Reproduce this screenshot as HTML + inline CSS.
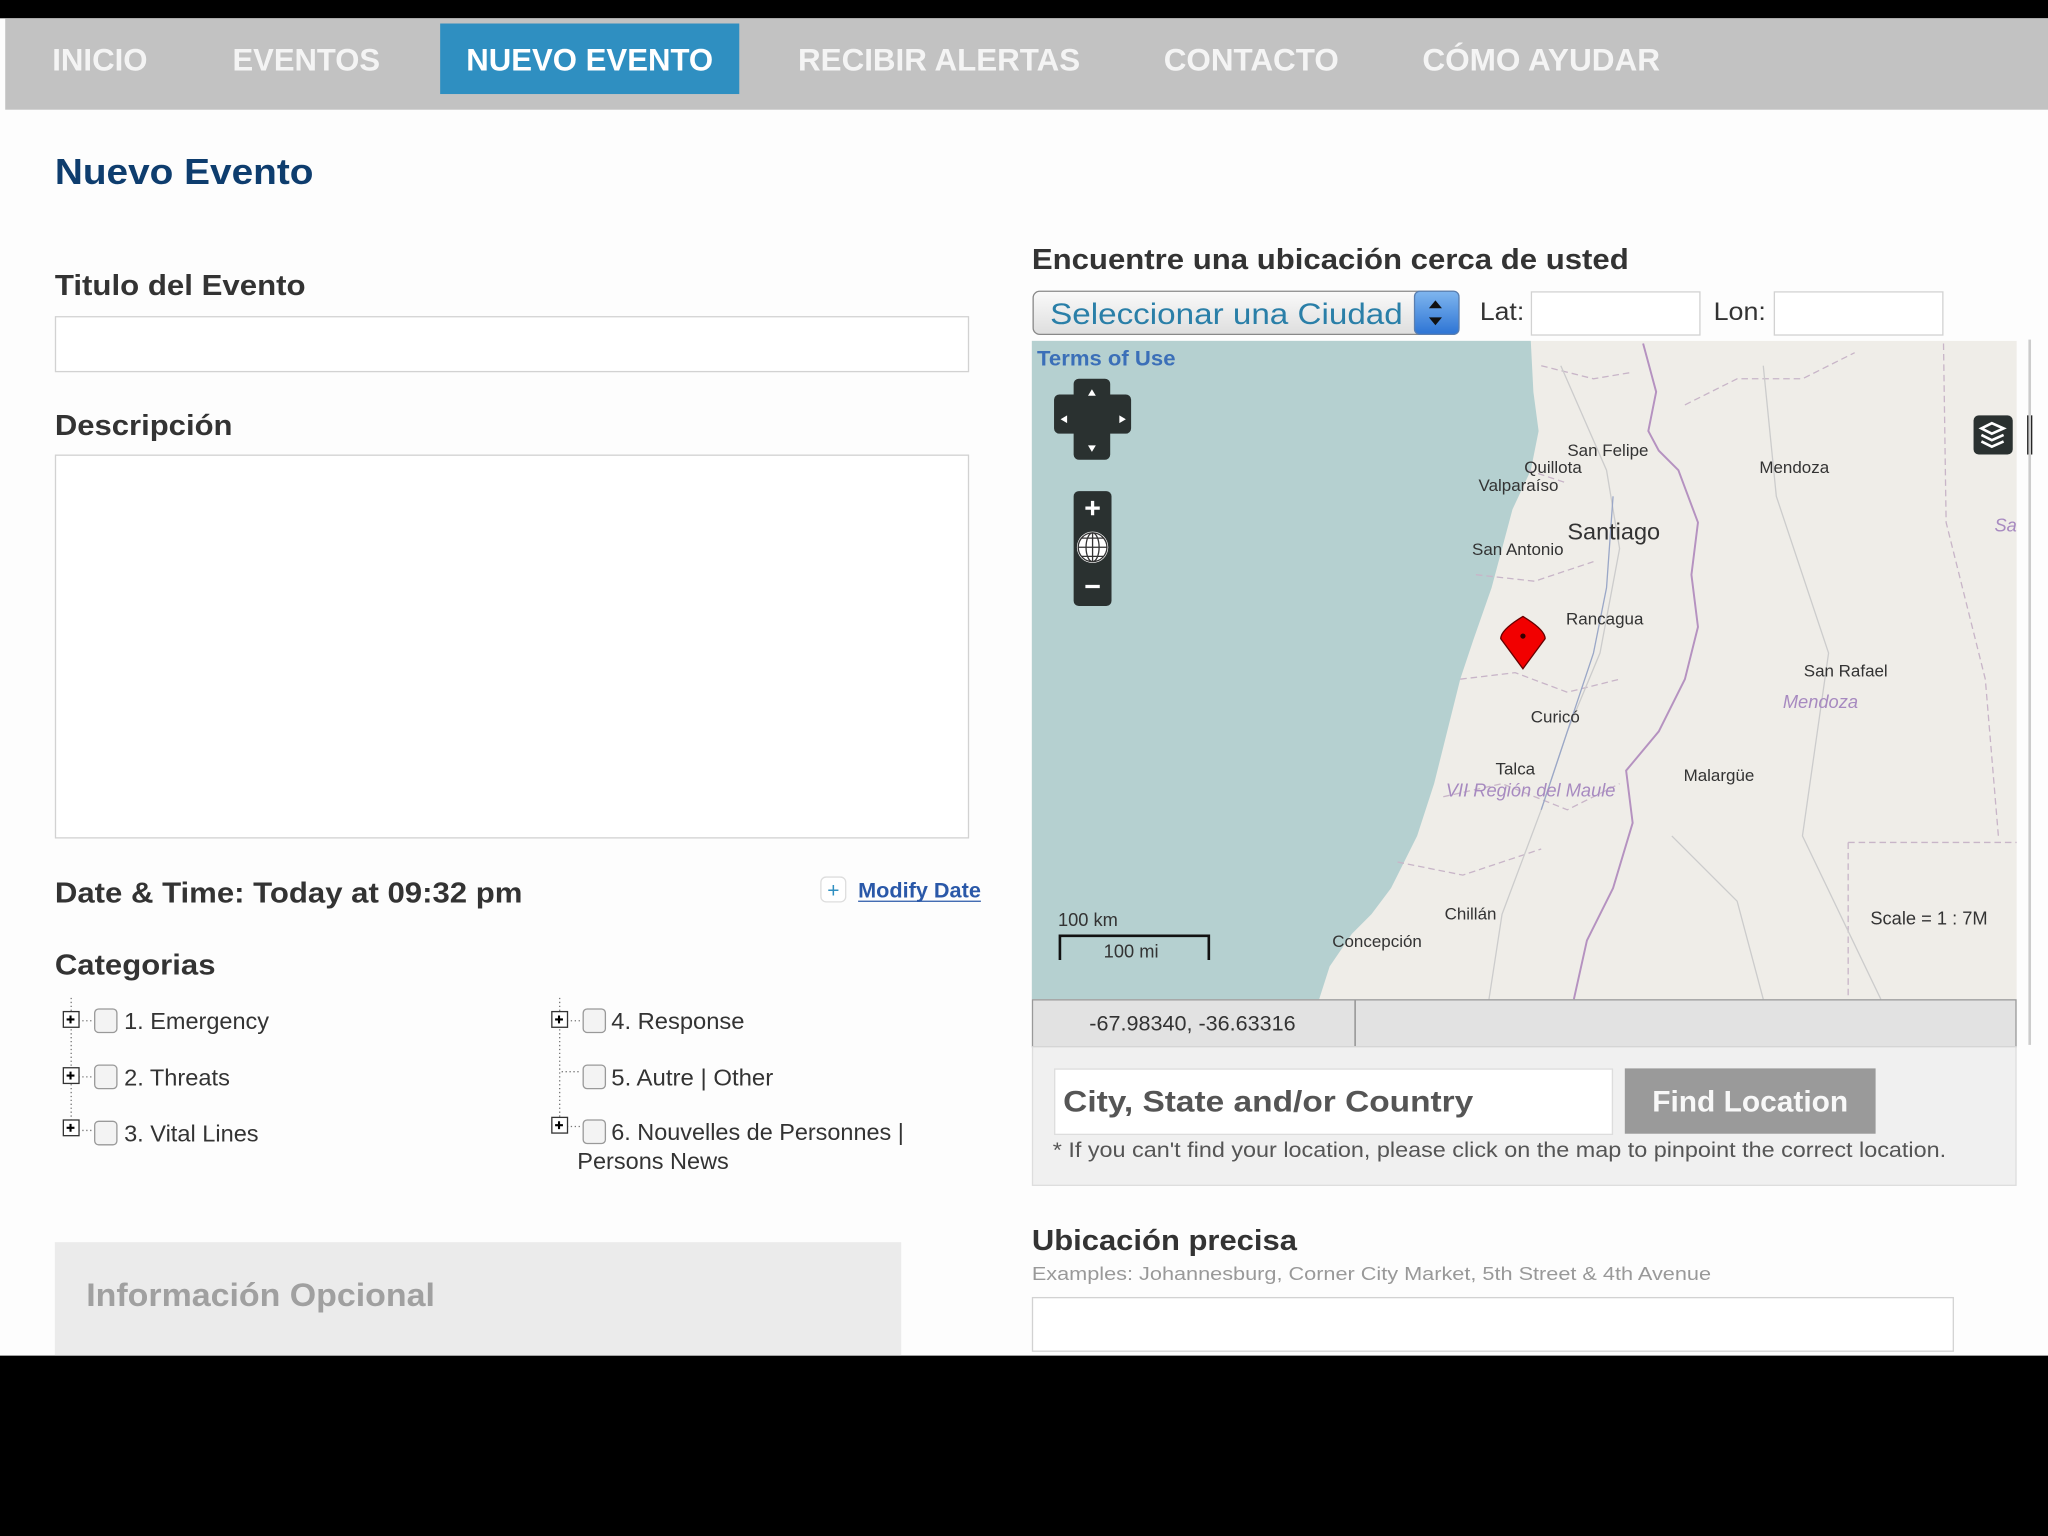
<!DOCTYPE html>
<html><head><meta charset="utf-8"><style>
html,body{margin:0;padding:0;background:#000;}
svg{display:block}
text{font-family:"Liberation Sans",Arial,sans-serif}
</style></head><body>
<svg width="2048" height="1536" viewBox="0 0 1568 1176" xmlns="http://www.w3.org/2000/svg">
<rect x="0" y="0" width="1568" height="1176" fill="#000"/>
<rect x="0" y="14" width="1568" height="1024" fill="#fdfdfd"/>
<rect x="4" y="14" width="1564" height="70" fill="#c2c2c2"/>
<rect x="337" y="18" width="229" height="54" fill="#2f8fc1"/>
<g font-weight="bold" font-size="24" fill="#f4f4f4">
<text x="40" y="54" textLength="73" lengthAdjust="spacingAndGlyphs">INICIO</text>
<text x="178" y="54" textLength="113" lengthAdjust="spacingAndGlyphs">EVENTOS</text>
<text x="357" y="54" textLength="189" lengthAdjust="spacingAndGlyphs" fill="#fff">NUEVO EVENTO</text>
<text x="611" y="54" textLength="216" lengthAdjust="spacingAndGlyphs">RECIBIR ALERTAS</text>
<text x="891" y="54" textLength="134" lengthAdjust="spacingAndGlyphs">CONTACTO</text>
<text x="1089" y="54" textLength="182" lengthAdjust="spacingAndGlyphs">CÓMO AYUDAR</text>
</g>
<text x="42" y="141" font-size="28" font-weight="bold" fill="#0e3d6e" textLength="198" lengthAdjust="spacingAndGlyphs">Nuevo Evento</text>
<g font-weight="bold" font-size="22" fill="#333">
<text x="42" y="226" textLength="192" lengthAdjust="spacingAndGlyphs">Titulo del Evento</text>
<text x="42" y="333" textLength="136" lengthAdjust="spacingAndGlyphs">Descripción</text>
<text x="42" y="691" textLength="358" lengthAdjust="spacingAndGlyphs">Date &amp; Time: Today at 09:32 pm</text>
<text x="42" y="746" textLength="123" lengthAdjust="spacingAndGlyphs">Categorias</text>
</g>
<rect x="42.5" y="242.5" width="699" height="42" fill="#fff" stroke="#d2d2d2"/>
<rect x="42.5" y="348.5" width="699" height="293" fill="#fff" stroke="#d2d2d2"/>
<rect x="628.5" y="671.5" width="19" height="19" rx="4" fill="#fff" stroke="#ddd"/>
<text x="638" y="687" font-size="16" fill="#2f8fc1" text-anchor="middle">+</text>
<text x="657" y="687" font-size="16" font-weight="bold" fill="#2a58a8" textLength="94" lengthAdjust="spacingAndGlyphs">Modify Date</text>
<line x1="657" y1="690" x2="751" y2="690" stroke="#2a58a8"/>
<g stroke="#777" stroke-dasharray="1,2" fill="none">
<line x1="54.5" y1="764" x2="54.5" y2="862"/>
<line x1="428.5" y1="764" x2="428.5" y2="858"/>
<line x1="60" y1="781.5" x2="70" y2="781.5"/><line x1="60" y1="824.5" x2="70" y2="824.5"/><line x1="60" y1="865.5" x2="70" y2="865.5"/>
<line x1="434" y1="781.5" x2="444" y2="781.5"/><line x1="430" y1="820.5" x2="444" y2="820.5"/><line x1="434" y1="862.5" x2="444" y2="862.5"/>
</g>
<g fill="#fff" stroke="#333" stroke-width="1">
<rect x="48.5" y="774.5" width="12" height="12"/><rect x="48.5" y="817.5" width="12" height="12"/><rect x="48.5" y="857.5" width="12" height="12"/>
<rect x="422.5" y="774.5" width="12" height="12"/><rect x="422.5" y="855.5" width="12" height="12"/>
</g>
<g stroke="#000" stroke-width="1.6">
<path d="M51 780.5h6M54 777.5v6M51 823.5h6M54 820.5v6M51 863.5h6M54 860.5v6M425 780.5h6M428 777.5v6M425 861.5h6M428 858.5v6"/>
</g>
<g fill="#f3f3f3" stroke="#999">
<rect x="72.5" y="772.5" width="17" height="18" rx="3"/><rect x="72.5" y="815.5" width="17" height="18" rx="3"/><rect x="72.5" y="858.5" width="17" height="18" rx="3"/>
<rect x="446.5" y="772.5" width="17" height="18" rx="3"/><rect x="446.5" y="815.5" width="17" height="18" rx="3"/><rect x="446.5" y="857.5" width="17" height="18" rx="3"/>
</g>
<g font-size="18" fill="#333">
<text x="95" y="788" textLength="111" lengthAdjust="spacingAndGlyphs">1. Emergency</text>
<text x="95" y="831" textLength="81" lengthAdjust="spacingAndGlyphs">2. Threats</text>
<text x="95" y="874" textLength="103" lengthAdjust="spacingAndGlyphs">3. Vital Lines</text>
<text x="468" y="788" textLength="102" lengthAdjust="spacingAndGlyphs">4. Response</text>
<text x="468" y="831" textLength="124" lengthAdjust="spacingAndGlyphs">5. Autre | Other</text>
<text x="468" y="873" textLength="224" lengthAdjust="spacingAndGlyphs">6. Nouvelles de Personnes |</text>
<text x="442" y="895" textLength="116" lengthAdjust="spacingAndGlyphs">Persons News</text>
</g>
<rect x="42" y="951" width="648" height="87" fill="#ebebeb"/>
<text x="66" y="1000" font-size="25" font-weight="bold" fill="#a0a0a0" textLength="267" lengthAdjust="spacingAndGlyphs">Información Opcional</text>
<text x="790" y="206" font-size="22" font-weight="bold" fill="#333" textLength="457" lengthAdjust="spacingAndGlyphs">Encuentre una ubicación cerca de usted</text>
<defs><linearGradient id="sg" x1="0" y1="0" x2="0" y2="1"><stop offset="0" stop-color="#fafafa"/><stop offset="1" stop-color="#dedede"/></linearGradient>
<linearGradient id="bg" x1="0" y1="0" x2="0" y2="1"><stop offset="0" stop-color="#7fb6ef"/><stop offset="1" stop-color="#2d74d4"/></linearGradient></defs>
<rect x="791" y="223" width="326" height="33" rx="5" fill="url(#sg)" stroke="#888"/>
<rect x="1083" y="223" width="34" height="33" rx="4" fill="url(#bg)" stroke="#5a7fb0"/>
<path d="M1094 236l5-6 5 6zM1094 243l5 6 5-6z" fill="#111"/>
<text x="804" y="248" font-size="23" fill="#2a7fa8" textLength="270" lengthAdjust="spacingAndGlyphs">Seleccionar una Ciudad</text>
<text x="1133" y="245" font-size="19" fill="#333" textLength="34" lengthAdjust="spacingAndGlyphs">Lat:</text>
<rect x="1172.5" y="223.5" width="129" height="33" fill="#fff" stroke="#d2d2d2"/>
<text x="1312" y="245" font-size="19" fill="#333" textLength="40" lengthAdjust="spacingAndGlyphs">Lon:</text>
<rect x="1358.5" y="223.5" width="129" height="33" fill="#fff" stroke="#d2d2d2"/>
<rect x="790" y="261" width="754" height="504" fill="#efede8"/>
<path d="M790 261 H1172 L1174 300 L1178 330 L1172 360 L1158 390 L1150 420 L1142 450 L1128 490 L1118 520 L1108 560 L1098 600 L1085 640 L1065 680 L1050 700 L1035 715 L1018 740 L1010 765 H790 Z" fill="#b5d0d0"/>
<g fill="none" stroke="#b592c0" stroke-width="1.5">
<path d="M1258 263 L1268 300 L1262 330 L1270 345 L1285 360 L1300 400 L1295 440 L1300 480 L1290 520 L1270 560 L1245 590 L1250 630 L1235 680 L1215 720 L1205 765"/>
</g>
<g fill="none" stroke="#c8b5c8" stroke-width="1" stroke-dasharray="5,3">
<path d="M1180 280 L1220 290 L1250 285 M1170 360 L1200 370 M1130 440 L1175 445 L1220 430 M1118 520 L1160 515 L1200 530 L1240 520 M1105 610 L1150 600 L1200 620 L1240 600 M1070 660 L1120 670 L1180 650 M1290 310 L1330 290 L1380 290 L1420 270 M1488 263 L1490 400 L1520 520 L1530 640 M1415 645 H1544 M1415 645 V765"/>
</g>
<g fill="none" stroke="#ccc" stroke-width="1">
<path d="M1195 280 L1230 360 L1240 420 L1225 500 L1200 560 L1180 620 L1150 700 L1140 765 M1350 280 L1360 380 L1400 500 L1380 640 L1440 765 M1280 640 L1330 690 L1350 765"/>
</g>
<g fill="none" stroke="#9aa7c7" stroke-width="1"><path d="M1235 380 L1230 450 L1220 500 L1200 560 L1180 620"/></g>
<text x="794" y="280" font-size="16" font-weight="bold" fill="#3b6fb8" textLength="106" lengthAdjust="spacingAndGlyphs">Terms of Use</text>
<path d="M826 290 h20 a4 4 0 0 1 4 4 v8 h12 a4 4 0 0 1 4 4 v22 a4 4 0 0 1-4 4 h-12 v16 a4 4 0 0 1-4 4 h-20 a4 4 0 0 1-4-4 v-16 h-11 a4 4 0 0 1-4-4 v-22 a4 4 0 0 1 4-4 h11 v-8 a4 4 0 0 1 4-4z" fill="#2a3130"/>
<path d="M836 298l-3 5h6z M836 346l-3-5h6z M812 321l5-3v6z M862 321l-5-3v6z" fill="#fff"/>
<rect x="822" y="376" width="29" height="88" rx="4" fill="#2a3130"/>
<path d="M831 389h11M836.5 383.5v11M831 449h11" stroke="#fff" stroke-width="2.5"/>
<circle cx="836.5" cy="419" r="12" fill="#fff"/>
<circle cx="836.5" cy="419" r="11" fill="none" stroke="#333"/>
<path d="M825.5 419h22M836.5 408v22M828 412h17M828 426h17" stroke="#333" stroke-width="1" fill="none"/>
<ellipse cx="836.5" cy="419" rx="5" ry="11" fill="none" stroke="#333"/>
<rect x="1511" y="318" width="30" height="30" rx="4" fill="#2a3130"/>
<path d="M1517 328l8-4 9 4-9 4zM1517 333l8 4 9-4M1517 338l8 4 9-4" fill="none" stroke="#fff" stroke-width="2"/>
<rect x="1552" y="318" width="4" height="30" fill="#222"/>
<path d="M1166 472 C1176 478 1183 484 1183 489 L1166 512 L1149 489 C1149 484 1156 478 1166 472 Z" fill="#f20000" stroke="#600" stroke-width="1"/>
<circle cx="1166" cy="487" r="2" fill="#300"/>
<g font-size="13" fill="#333">
<text x="1200" y="349">San Felipe</text>
<text x="1167" y="362">Quillota</text>
<text x="1132" y="376">Valparaíso</text>
<text x="1200" y="413" font-size="18">Santiago</text>
<text x="1127" y="425">San Antonio</text>
<text x="1199" y="478">Rancagua</text>
<text x="1172" y="553">Curicó</text>
<text x="1145" y="593">Talca</text>
<text x="1106" y="704">Chillán</text>
<text x="1020" y="725">Concepción</text>
<text x="1347" y="362">Mendoza</text>
<text x="1381" y="518">San Rafael</text>
<text x="1289" y="598">Malargüe</text>
<text x="1432" y="708" font-size="14">Scale = 1 : 7M</text>
<text x="810" y="709" font-size="14">100 km</text>
<text x="845" y="733" font-size="14">100 mi</text>
</g>
<g font-size="14" fill="#a78ac0" font-style="italic">
<text x="1107" y="610">VII Región del Maule</text>
<text x="1365" y="542">Mendoza</text>
<text x="1527" y="407">Sa</text>
</g>
<path d="M811.5 735 V716.5 H925.5 V735" fill="none" stroke="#111" stroke-width="2"/>
<rect x="790.5" y="765.5" width="753" height="36" fill="#e2e2e2" stroke="#999"/>
<line x1="1037.5" y1="766" x2="1037.5" y2="801" stroke="#888"/>
<text x="913" y="789" font-size="16" fill="#333" text-anchor="middle" textLength="158" lengthAdjust="spacingAndGlyphs">-67.98340, -36.63316</text>
<rect x="1553" y="260" width="2" height="540" fill="#ccc"/>
<rect x="790.5" y="801.5" width="753" height="106" fill="#f0f0f0" stroke="#ddd"/>
<rect x="807.5" y="818.5" width="427" height="50" fill="#fff" stroke="#ddd"/>
<text x="814" y="851" font-size="23" font-weight="bold" fill="#555" textLength="314" lengthAdjust="spacingAndGlyphs">City, State and/or Country</text>
<rect x="1244" y="818" width="192" height="50" fill="#9a9a9a"/>
<text x="1340" y="851" font-size="23" font-weight="bold" fill="#f8f8f8" text-anchor="middle" textLength="150" lengthAdjust="spacingAndGlyphs">Find Location</text>
<text x="806" y="886" font-size="16" fill="#555" textLength="684" lengthAdjust="spacingAndGlyphs">* If you can't find your location, please click on the map to pinpoint the correct location.</text>
<text x="790" y="957" font-size="22" font-weight="bold" fill="#333" textLength="203" lengthAdjust="spacingAndGlyphs">Ubicación precisa</text>
<text x="790" y="980" font-size="14" fill="#999" textLength="520" lengthAdjust="spacingAndGlyphs">Examples: Johannesburg, Corner City Market, 5th Street &amp; 4th Avenue</text>
<rect x="790.5" y="993.5" width="705" height="41" fill="#fff" stroke="#d2d2d2"/>
<rect x="0" y="1038" width="1568" height="138" fill="#000"/>
</svg>
</body></html>
